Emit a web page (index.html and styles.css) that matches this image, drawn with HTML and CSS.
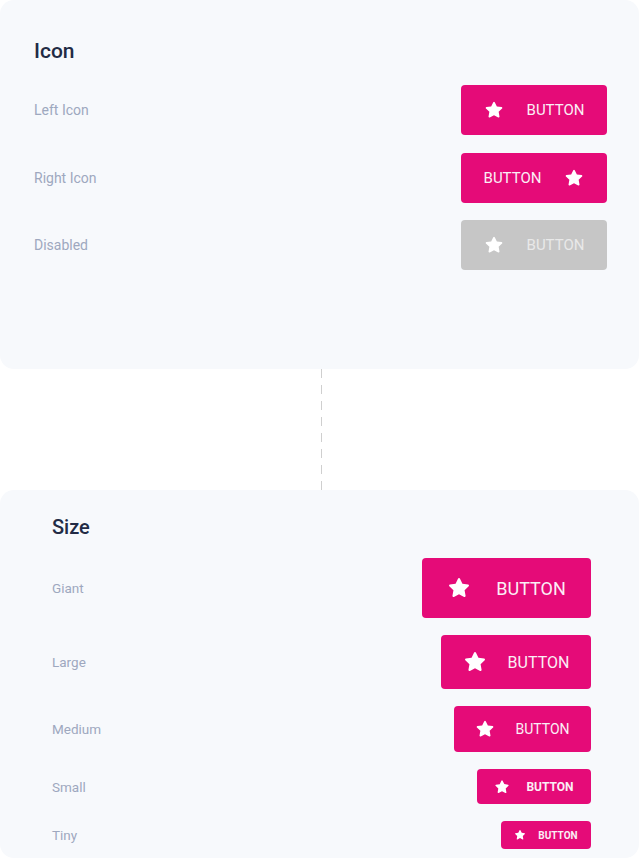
FILE: index.html
```html
<!DOCTYPE html>
<html lang="en">
<head>
<meta charset="utf-8">
<title>Buttons</title>
<link rel="stylesheet" href="styles.css">
</head>
<body>
<svg class="defs" width="0" height="0" aria-hidden="true">
  <defs>
    <symbol id="star" viewBox="0 0 24 24">
      <path d="M17.56 21a1 1 0 0 1-.46-.11L12 18.220l-5.1 2.67a1 1 0 0 1-1.45-1.06l1-5.63-4.12-4a1 1 0 0 1-.25-1 1 1 0 0 1 .81-.68l5.7-.83 2.51-5.130a1 1 0 0 1 1.8 0l2.54 5.12 5.7.83a1 1 0 0 1 .81.68 1 1 0 0 1-.25 1l-4.12 4 1 5.63a1 1 0 0 1-.4 1 1 1 0 0 1-.62.18z"/>
    </symbol>
  </defs>
</svg>
<main class="page">
  <section class="card card-icon">
    <h2 class="card-title">Icon</h2>
    <div class="rows rows-icon">
      <div class="row">
        <span class="label">Left Icon</span>
        <button class="btn btn-top"><svg class="ico"><use href="#star"/></svg><span>BUTTON</span></button>
      </div>
      <div class="row">
        <span class="label">Right Icon</span>
        <button class="btn btn-top"><span>BUTTON</span><svg class="ico"><use href="#star"/></svg></button>
      </div>
      <div class="row">
        <span class="label">Disabled</span>
        <button class="btn btn-top btn-disabled" disabled><svg class="ico"><use href="#star"/></svg><span>BUTTON</span></button>
      </div>
    </div>
  </section>

  <div class="connector"></div>

  <section class="card card-size">
    <h2 class="card-title">Size</h2>
    <div class="rows rows-size">
      <div class="row">
        <span class="label">Giant</span>
        <button class="btn btn-giant"><svg class="ico"><use href="#star"/></svg><span>BUTTON</span></button>
      </div>
      <div class="row">
        <span class="label">Large</span>
        <button class="btn btn-large"><svg class="ico"><use href="#star"/></svg><span>BUTTON</span></button>
      </div>
      <div class="row">
        <span class="label">Medium</span>
        <button class="btn btn-medium"><svg class="ico"><use href="#star"/></svg><span>BUTTON</span></button>
      </div>
      <div class="row">
        <span class="label">Small</span>
        <button class="btn btn-small"><svg class="ico"><use href="#star"/></svg><span>BUTTON</span></button>
      </div>
      <div class="row">
        <span class="label">Tiny</span>
        <button class="btn btn-tiny"><svg class="ico"><use href="#star"/></svg><span>BUTTON</span></button>
      </div>
    </div>
  </section>
</main>
</body>
</html>
```

FILE: styles.css
```css
* { box-sizing: border-box; }

html, body {
  margin: 0;
  padding: 0;
  background: #ffffff;
  font-family: Roboto, "Liberation Sans", sans-serif;
}

.defs { position: absolute; width: 0; height: 0; overflow: hidden; }

.page {
  display: flex;
  flex-direction: column;
  width: 640px;
}

.card {
  width: 639px;
  background: #f7f9fc;
  border-radius: 14px;
}

.card-icon {
  height: 369px;
  padding: 39px 32px 0 34px;
}

.card-size {
  height: 368px;
  padding: 25px 48px 0 52px;
}

.card-title {
  margin: 0;
  font-size: 20px;
  line-height: 24px;
  font-weight: 500;
  color: #222b45;
}

.card-icon .card-title { font-size: 21px; }

.rows {
  display: flex;
  flex-direction: column;
}

.rows-icon { margin-top: 22px; gap: 17.5px; }
.rows-size { margin-top: 19px; gap: 17px; }

.row {
  display: flex;
  align-items: center;
  justify-content: space-between;
}

.label {
  font-size: 14px;
  color: #9ea8bf;
}

.rows-size .label { font-size: 13.5px; }

.connector {
  width: 1px;
  height: 121px;
  margin-left: 321px;
  background: repeating-linear-gradient(to bottom, #cfcfcf 0 9px, transparent 9px 16px);
}

.btn {
  display: inline-flex;
  align-items: center;
  justify-content: center;
  border: none;
  border-radius: 4px;
  background: #e50b78;
  color: #fbeef5;
  font-family: Roboto, "Liberation Sans", sans-serif;
  font-weight: 400;
  padding: 0;
  cursor: pointer;
}

.ico { fill: #ffffff; flex: none; }

.btn-top { width: 146px; height: 50px; font-size: 15px; gap: 23px; }
.btn-top .ico { width: 20px; height: 20px; }

.btn-disabled { background: #c6c6c6; color: #e9e9e9; cursor: default; }

.btn-giant { width: 169px; height: 60px; font-size: 18px; gap: 25px; }
.btn-giant .ico { width: 24px; height: 24px; }

.btn-large { width: 150px; height: 54px; font-size: 16px; gap: 21px; }
.btn-large .ico { width: 24px; height: 24px; }

.btn-medium { width: 137px; height: 46px; font-size: 14px; gap: 20px; }
.btn-medium .ico { width: 20px; height: 20px; }

.btn-small { width: 114px; height: 35px; font-size: 12px; font-weight: 700; gap: 16px; }
.btn-small .ico { width: 16px; height: 16px; }

.btn-tiny { width: 90px; height: 28px; font-size: 10px; font-weight: 700; gap: 12px; }
.btn-tiny .ico { width: 12px; height: 12px; }
```
